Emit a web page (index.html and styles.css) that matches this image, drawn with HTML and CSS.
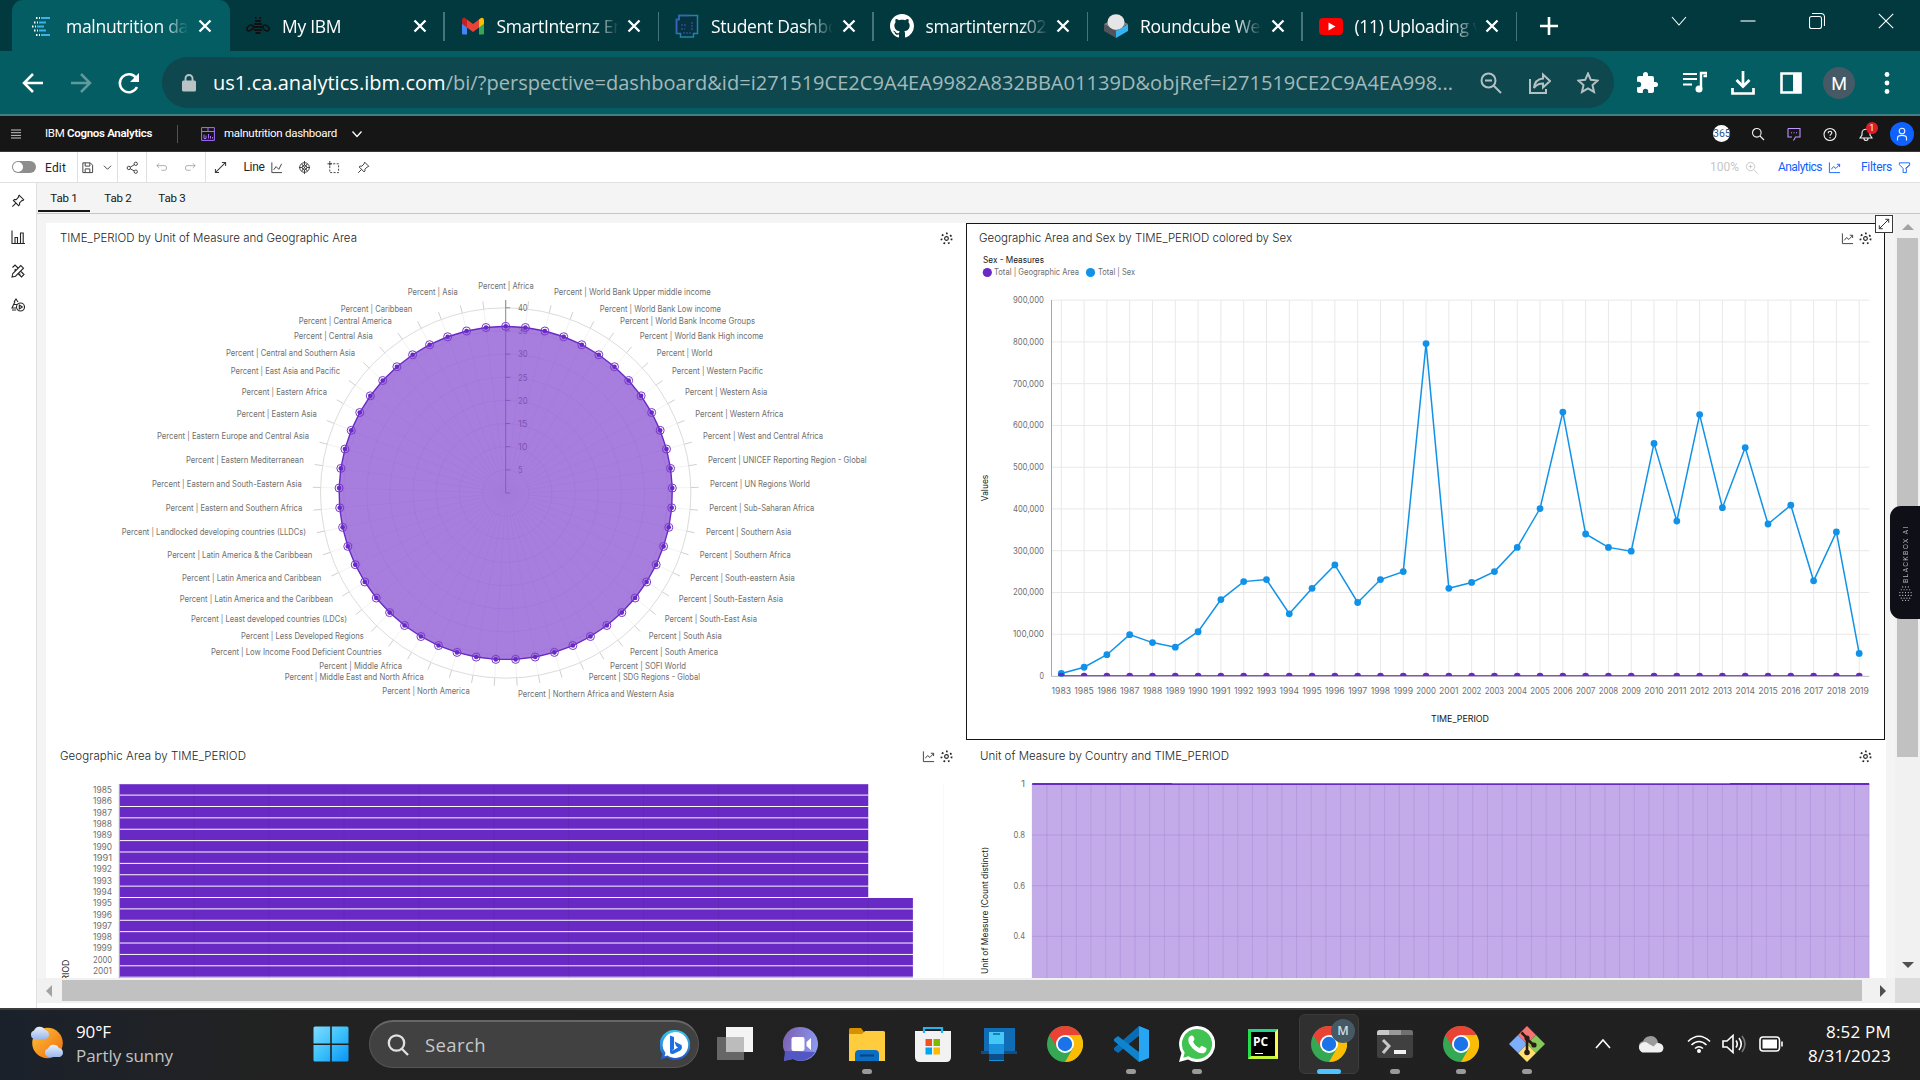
FILE: index.html
```html
<!DOCTYPE html>
<html lang="en">
<head>
<meta charset="utf-8">
<title>malnutrition dashboard</title>
<link rel="stylesheet" href="styles.css">
</head>
<body>
<svg class="defs" width="0" height="0" aria-hidden="true">
  <symbol id="close" viewBox="0 0 16 16"><path d="M2.5 2.5l11 11M13.5 2.5l-11 11" stroke="#fff" stroke-width="2.300" fill="none"/></symbol>
  <symbol id="gear" viewBox="0 0 14 14"><circle cx="7" cy="7" r="2" fill="none" stroke="#262626" stroke-width="1.200"/><circle cx="7" cy="7" r="5.500" fill="none" stroke="#262626" stroke-width="1.900" stroke-dasharray="1.900 3.037"/></symbol>
  <symbol id="trend" viewBox="0 0 14 14"><path d="M1.500 1.500v11h11.500M3.500 9l2.500-3 2.500 2 4-4.200M9.500 3.500h3v3" stroke="currentColor" fill="none" stroke-width="1"/></symbol>
  <symbol id="pin" viewBox="0 0 16 16"><path d="M9.500 1.500l5 5-1 1-.8-.3-3 3 .2 2-1.200 1.200-6-6 1.200-1.200 2 .2 3-3-.4-.9zM5.700 10.300L1.500 14.500" fill="none" stroke="currentColor" stroke-width="1.200"/></symbol>
  <symbol id="expand" viewBox="0 0 14 14"><path d="M8.500 1.500h4v4M12.500 1.500l-11 11M1.500 8.500v4h4" fill="none" stroke="currentColor" stroke-width="1.100"/></symbol>
  <symbol id="chrome" viewBox="0 0 36 36">
    <circle cx="18" cy="18" r="18" fill="#34a853"/>
    <path d="M18 9h15.600A18 18 0 0 1 18 36l7.800-13.500z" fill="#fbbc05"/>
    <path d="M2.400 9A18 18 0 0 1 33.600 9H18L10.200 13.500v9z" fill="#ea4335"/>
    <circle cx="18" cy="18" r="9" fill="#fff"/><circle cx="18" cy="18" r="7.200" fill="#1a73e8"/>
  </symbol>
</svg>

<div class="tabstrip">
  <div class="btab active">
    <svg class="fav" viewBox="0 0 24 24"><g stroke="#3fb0e8" stroke-width="1.800"><path d="M11 4h9M9 8.500h7M7 12.500h7M9 16.500h7M11 21h9"/><path stroke="#fff" stroke-dasharray="1.500 1.500" d="M6 4h4M4 8.500h4M2 12.500h4M4 16.500h4M6 21h4"/></g></svg>
    <span class="btitle">malnutrition dashboard</span><svg class="x"><use href="#close"/></svg>
  </div>
  <div class="btab">
    <svg class="fav" viewBox="0 0 24 24"><path d="M9 7h6M8 10h8M8 13h8M8 16h8M9.500 19h5M9 4h1.500M13.500 4H15" stroke="#101010" stroke-width="2"/><ellipse cx="4" cy="14" rx="3.500" ry="2.400" transform="rotate(-35 4 14)" fill="none" stroke="#101010" stroke-width="1.500"/><ellipse cx="20" cy="14" rx="3.500" ry="2.400" transform="rotate(35 20 14)" fill="none" stroke="#101010" stroke-width="1.500"/></svg>
    <span class="btitle">My IBM</span><svg class="x"><use href="#close"/></svg>
  </div>
  <div class="btab">
    <svg class="fav" viewBox="0 0 24 24"><path d="M1 6v13.500q0 1 1 1h4V10z" fill="#4285f4"/><path d="M23 6v13.500q0 1-1 1h-4V10z" fill="#34a853"/><path d="M18 5.500L20 4q3-1 3 2.500v3.300l-5 3.700z" fill="#fbbc04"/><path d="M1 9.800V6.500Q1 3 4 4l2 1.500v8z" fill="#c5221f"/><path d="M6 5.500l6 4.500 6-4.500v8L12 18l-6-4.500z" fill="#ea4335"/></svg>
    <span class="btitle">SmartInternz Email</span><svg class="x"><use href="#close"/></svg>
  </div>
  <div class="btab">
    <svg class="fav" viewBox="0 0 24 24"><path d="M4 1.500h18.500v18h-4v3.500h-13v-3.500H1.500V5.500H4z" fill="#073340" stroke="#2583a6" stroke-width="1.500"/><path d="M1.500 20V5.500H4V1.500h10" stroke="#3a61b8" fill="none" stroke-width="1.500"/><path d="M6 11h5M6 15h4M8 19h8M17 8v8" stroke="#244d91" stroke-width="1.500" stroke-dasharray="2 1"/></svg>
    <span class="btitle">Student Dashboard</span><svg class="x"><use href="#close"/></svg>
  </div>
  <div class="btab">
    <svg class="fav" viewBox="0 0 16 16"><path fill="#fff" d="M8 0C3.580 0 0 3.580 0 8c0 3.540 2.290 6.530 5.470 7.590.4.070.55-.17.55-.38 0-.19-.01-.82-.01-1.490-2.010.37-2.530-.49-2.690-.94-.09-.23-.48-.94-.82-1.130-.28-.15-.68-.52-.01-.53.63-.01 1.080.58 1.230.82.72 1.210 1.870.87 2.330.66.07-.52.28-.87.51-1.070-1.780-.2-3.640-.89-3.640-3.950 0-.87.31-1.590.82-2.150-.08-.2-.36-1.020.08-2.120 0 0 .67-.21 2.200.82.64-.18 1.320-.27 2-.27s1.360.09 2 .27c1.530-1.040 2.200-.82 2.200-.82.44 1.100.16 1.920.08 2.120.51.56.82 1.270.82 2.150 0 3.070-1.870 3.750-3.650 3.950.29.25.54.73.54 1.480 0 1.070-.01 1.930-.01 2.200 0 .21.15.46.55.38A8.010 8.010 0 0 0 16 8c0-4.420-3.580-8-8-8z"/></svg>
    <span class="btitle">smartinternz02/SI</span><svg class="x"><use href="#close"/></svg>
  </div>
  <div class="btab">
    <svg class="fav" viewBox="0 0 24 24"><path d="M0 10l12 7v7L0 17z" fill="#4f5559"/><path d="M24 10l-12 7v7l12-7z" fill="#35b4f4"/><path d="M0 10l12-6 12 6-12 7z" fill="#7b8386"/><ellipse cx="12" cy="8" rx="8.500" ry="7.800" fill="#e6e6e6"/></svg>
    <span class="btitle">Roundcube Webmail</span><svg class="x"><use href="#close"/></svg>
  </div>
  <div class="btab">
    <svg class="fav" viewBox="0 0 24 24"><rect y="4" width="24" height="17" rx="4" fill="#f00"/><path d="M9.500 8.500v8l7-4z" fill="#fff"/></svg>
    <span class="btitle">(11) Uploading vid</span><svg class="x"><use href="#close"/></svg>
  </div>
  <svg class="plus" viewBox="0 0 20 20"><path d="M10 1v18M1 10h18" stroke="#fff" stroke-width="2.600"/></svg>
  <div class="winctl">
    <svg viewBox="0 0 16 16"><path d="M1 4l7 8 7-8" /></svg>
    <svg viewBox="0 0 16 16"><path d="M.5 8h15"/></svg>
    <svg viewBox="0 0 16 16"><path d="M3 .5h9q3.500 0 3.500 3.500v9M2.500 3.500h8q2 0 2 2v8q0 2-2 2h-8q-2 0-2-2v-8q0-2 2-2z"/></svg>
    <svg viewBox="0 0 16 16"><path d="M.8.8l14.400 14.400M15.200.8L.8 15.200"/></svg>
  </div>
</div>

<div class="navbar">
  <div class="navbtns">
    <svg viewBox="0 0 24 24"><path d="M22 12H3M12 3l-9 9 9 9" stroke="#fff"/></svg>
    <svg viewBox="0 0 24 24"><path d="M2 12h19M12 3l9 9-9 9" stroke="#62999d"/></svg>
    <svg viewBox="0 0 24 24"><path d="M20 16a9 9 0 1 1-.5-8.500" stroke="#fff"/><path d="M22 2v9h-9z" fill="#fff" stroke="none"/></svg>
  </div>
  <div class="omnibox">
    <svg class="lock" viewBox="0 0 14 18"><path d="M3.500 8V4.500a3.500 3.500 0 0 1 7 0V8" fill="none" stroke="#b9c2c5" stroke-width="1.900"/><rect y="6.500" width="14" height="11" rx="1.500" fill="#b9c2c5"/></svg>
    <span class="url" data-w="1240"><b>us1.ca.analytics.ibm.com</b>/bi/?perspective=dashboard&amp;id=i271519CE2C9A4EA9982A832BBA01139D&amp;objRef=i271519CE2C9A4EA998...</span>
    <div class="omni-icons">
      <svg viewBox="0 0 22 22"><circle cx="8.500" cy="8.500" r="7"/><path d="M13.500 13.500L21 21M5 8.500h7"/></svg>
      <svg viewBox="0 0 22 22"><path d="M1 7v14h16v-4M5 16c.5-6 4-9 9-9.500V2.500L21 9l-7 6.500v-4c-4 0-7 1.500-9 4.500z"/></svg>
      <svg viewBox="0 0 22 22"><path d="M11 1.500l2.800 6.300 6.900.7-5.200 4.600 1.500 6.800-6-3.500-6 3.500 1.500-6.800L1.300 8.500l6.900-.7z"/></svg>
    </div>
  </div>
  <div class="ext">
    <svg viewBox="0 0 24 24"><path fill="#fff" d="M20.500 11H19V7a2 2 0 0 0-2-2h-4V3.500a2.500 2.500 0 0 0-5 0V5H4a2 2 0 0 0-2 2v3.800h1.500a2.700 2.700 0 0 1 0 5.400H2V20a2 2 0 0 0 2 2h3.800v-1.500a2.700 2.700 0 0 1 5.400 0V22H17a2 2 0 0 0 2-2v-4h1.500a2.500 2.500 0 0 0 0-5z"/></svg>
    <svg viewBox="0 0 24 24"><path d="M0 3h14M0 8h14M0 13.500h9" stroke="#fff" stroke-width="2.200"/><path d="M18 18V2h6v3h-3.500" fill="none" stroke="#fff" stroke-width="2.400"/><circle cx="16" cy="18" r="3.500" fill="#fff"/></svg>
    <svg viewBox="0 0 24 24"><path d="M12 0v14M5.500 9l6.500 6.500L18.500 9M1.500 17v5.500h21V17" fill="none" stroke="#fff" stroke-width="2.700"/></svg>
    <svg viewBox="0 0 24 24"><path d="M2.500 2.500h19v19h-19z" fill="none" stroke="#fff" stroke-width="2.600"/><path d="M14 2h8v20h-8z" fill="#fff"/></svg>
    <span class="avatar">M</span>
    <svg viewBox="0 0 24 24"><g fill="#fff"><circle cx="12" cy="3.500" r="2.400"/><circle cx="12" cy="12" r="2.400"/><circle cx="12" cy="20.500" r="2.400"/></g></svg>
  </div>
</div>

<header class="apphead">
  <svg class="burger" viewBox="0 0 10 10"><path d="M0 1h10M0 3.700h10M0 6.400h10M0 9h10" stroke="#c6c6c6"/></svg>
  <span class="brand" data-w="107">IBM <b>Cognos Analytics</b></span>
  <i class="hsep"></i>
  <svg class="dashico" viewBox="0 0 14 14" fill="none" stroke="#a56eff"><path d="M.6.600h12.800v12.800H.6zM.6 4.500h12.800M7 .6v3.900M3 7.500v4h2v-3M7.500 7v4.500M9.500 9v2.500M11.500 10v1.500"/></svg>
  <span class="dashname" data-w="113">malnutrition dashboard</span>
  <svg class="hchev" viewBox="0 0 10 10"><path d="M.5 2.500L5 7.500l4.500-5" fill="none" stroke="#fff" stroke-width="1.300"/></svg>
  <div class="headicons">
    <span><em class="c365">365</em></span>
    <span><svg viewBox="0 0 14 14"><circle cx="5.800" cy="5.800" r="4.300"/><path d="M9 9l4 4"/></svg></span>
    <span><svg class="chat" viewBox="0 0 14 14"><path d="M1 1.500h12v8.500H8.500L6.500 13.500M1 1.500V10h4M4 5.800h1M6.500 5.800h1M9 5.800h1"/></svg></span>
    <span><svg viewBox="0 0 14 14"><circle cx="7" cy="7.500" r="6"/><path d="M5.200 6.200c0-2.600 3.800-2.400 3.600-.2-.1 1.300-1.800 1.200-1.800 2.800M7 10v1.200"/></svg></span>
    <span class="bell"><svg viewBox="0 0 14 14"><path d="M1 11h12l-2-3V6c0-5-8-5-8 0v2zM5 11.500c0 2.600 4 2.600 4 0"/></svg><em class="badge">1</em></span>
    <span><em class="user"><svg viewBox="0 0 14 14"><circle cx="7" cy="4" r="2.800"/><path d="M2.500 13.500V11c0-3.500 9-3.500 9 0v2.500"/></svg></em></span>
  </div>
</header>

<div class="toolbar">
  <span class="toggle"></span><span class="edit" data-w="21">Edit</span><i></i>
  <span class="save"><svg viewBox="0 0 14 14"><path d="M2 2h8l2.500 2.500V12.500H2zM4.500 2v3.500h5V2M4.500 12.500v-4h5v4"/></svg><svg class="mini" viewBox="0 0 10 10"><path d="M1 3l4 4 4-4"/></svg></span><i></i>
  <span class="one"><svg viewBox="0 0 14 14"><circle cx="3" cy="7.500" r="1.800"/><circle cx="10.500" cy="3" r="1.800"/><circle cx="10.500" cy="11.500" r="1.800"/><path d="M4.600 6.600L9 4M4.600 8.400L9 10.700"/></svg></span><i></i>
  <span class="undo"><svg viewBox="0 0 14 14"><path d="M4.500 2.500L2 5l2.500 2.500M2 5h8.500q2 0 2 2.500T10.500 10H7"/></svg><svg viewBox="0 0 14 14"><path d="M9.500 2.500L12 5 9.500 7.500M12 5H3.500q-2 0-2 2.500T3.500 10H7"/></svg></span><i></i>
  <span class="cell"><svg><use href="#expand"/></svg></span>
  <span class="line"><span data-w="21">Line</span><svg viewBox="0 0 14 14"><path d="M2 1.500v11h11M4 9.500l2.500-3.500 3 3L12.500 3"/></svg></span>
  <span class="cell"><svg viewBox="0 0 14 14"><circle cx="7" cy="7" r="5.200"/><circle cx="7" cy="7" r="2.500"/><path d="M7 0v4.500M7 9.500V14M1 7h3.500M9.500 7H13M4 3l6 8M10 3l-6 8"/></svg></span>
  <span class="cell"><svg viewBox="0 0 14 14"><path d="M3 3h9.500v9.500H3z" stroke-dasharray="2.200 1.500"/><path d="M3 0v5M.5 3h5"/></svg></span>
  <span class="cell"><svg><use href="#pin"/></svg></span>
  <div class="tright">
    <span class="zoomlvl"><span data-w="29">100%</span><svg viewBox="0 0 14 14"><circle cx="6" cy="6" r="4.500"/><path d="M9.500 9.500l4 4M6 4v4M4 6h4"/></svg></span>
    <span class="blue"><span data-w="44">Analytics</span><svg><use href="#trend"/></svg></span>
    <span class="blue"><span data-w="31">Filters</span><svg viewBox="0 0 14 14"><path d="M1.500 2h11v2L9 8v4.500H5.500V8L1.500 4zM8 8l5-4"/></svg></span>
  </div>
</div>

<div class="work">
  <nav class="rail">
    <svg><use href="#pin"/></svg>
    <svg viewBox="0 0 14 14"><path d="M1 .5v13h13M4 13V7.500h2.500V13M9.500 13V3h2.700v10"/></svg>
    <svg viewBox="0 0 14 14"><path d="M1.500 3.500L4 1l3 3M9.500 7l3.500 3.500-2.500 2.500L7 9.500M1 13l.8-3.500 8-8 2.700 2.700-8 8zM3.500 6.500l1.300-1.300M8 11l1.300-1.300"/></svg>
    <svg viewBox="0 0 14 14"><path d="M5 10H1l3-6.500M3 4L5 1l2 3M1 12h4M3 6.500h3"/><circle cx="9.500" cy="9" r="4"/><path d="M8.300 7v4l3-2z"/></svg>
  </nav>
  <div class="main">
    <div class="dtabs"><span class="on">Tab 1</span><span>Tab 2</span><span>Tab 3</span></div>
    <div class="stage">
      <div class="canvas">
        <section class="panel">
          <h2><span data-w="297">TIME_PERIOD by Unit of Measure and Geographic Area</span><svg><use href="#gear"/></svg></h2>
          <svg id="radar" viewBox="46 253 920 487"></svg>
        </section>
        <section class="panel selected">
          <h2><span data-w="313">Geographic Area and Sex by TIME_PERIOD colored by Sex</span><svg><use href="#trend"/></svg><svg><use href="#gear"/></svg></h2>
          <svg id="lines" viewBox="967 253 917 486"></svg>
          <span class="grow"><svg><use href="#expand"/></svg></span>
        </section>
        <section class="panel">
          <h2><span data-w="186">Geographic Area by TIME_PERIOD</span><svg><use href="#trend"/></svg><svg><use href="#gear"/></svg></h2>
          <svg id="bars" viewBox="46 772 920 206"></svg>
        </section>
        <section class="panel">
          <h2><span data-w="249">Unit of Measure by Country and TIME_PERIOD</span><svg><use href="#gear"/></svg></h2>
          <svg id="area" viewBox="966 772 919 206"></svg>
        </section>
      </div>
      <div class="vscroll"><svg viewBox="0 0 12 6"><path d="M0 6l6-6 6 6z" fill="#a3a3a3"/></svg><i></i><svg viewBox="0 0 12 6"><path d="M0 0l6 6 6-6z" fill="#505050"/></svg></div>
      <div class="hscroll"><svg viewBox="0 0 6 12"><path d="M6 0L0 6l6 6z" fill="#a3a3a3"/></svg><i></i><svg viewBox="0 0 6 12"><path d="M0 0l6 6-6 6z" fill="#505050"/></svg></div>
      <div class="corner"></div>
    </div>
  </div>
</div>

<aside class="blackbox"><span>BLACKBOX AI</span>
  <svg viewBox="0 0 16 16"><g fill="none" stroke="#c8c8d0" stroke-linecap="round" stroke-dasharray="0 3" stroke-width="1.300"><path d="M5 1h7M3.500 4h10M2 7h13M2 10h13M3.500 13h10M5 15.300h7"/></g></svg>
</aside>

<footer class="taskbar">
  <div class="weather">
    <svg viewBox="0 0 36 34"><defs><linearGradient id="sun" x2="1" y2="1"><stop stop-color="#ffc53a"/><stop offset="1" stop-color="#ee6a0c"/></linearGradient><linearGradient id="cl" x2="0" y2="1"><stop stop-color="#e8f0fd"/><stop offset="1" stop-color="#9db7ec"/></linearGradient></defs><circle cx="18.500" cy="18" r="15.300" fill="url(#sun)"/><path d="M5 14a4.500 4.500 0 0 1 0-8.500 6 6 0 0 1 11-.5 4.700 4.700 0 0 1 1 9z" fill="url(#cl)"/><path d="M19 32a4.500 4.500 0 0 1 0-8.500 6 6 0 0 1 11-.5 4.700 4.700 0 0 1 1 9z" fill="url(#cl)"/></svg>
    <p><span data-w="35">90°F</span><span class="dim" data-w="97">Partly sunny</span></p>
  </div>
  <div class="tasks">
    <span class="app"><svg viewBox="0 0 36 36"><defs><linearGradient id="win" x2="1" y2="1"><stop stop-color="#7fdcff"/><stop offset=".5" stop-color="#3cc1fb"/><stop offset="1" stop-color="#0a93f5"/></linearGradient></defs><path d="M2 .5h15.200v17H.5V2q0-1.500 1.500-1.500zM18.800.500H34q1.500 0 1.500 1.500v15.500H18.800zM.5 19h16.700v16.500H2Q.5 35.500.5 34zM18.800 19h16.700v15q0 1.500-1.500 1.500H18.800z" fill="url(#win)"/></svg></span>
    <div class="search">
      <svg class="glass" viewBox="0 0 22 22"><circle cx="9.500" cy="9" r="7.700"/><path d="M14.500 14.500l6.500 6.500"/></svg>
      <span data-w="61">Search</span>
      <svg class="bing" viewBox="0 0 30 30"><defs><linearGradient id="bg" x2="0" y2="1"><stop stop-color="#35c8ee"/><stop offset="1" stop-color="#2556c8"/></linearGradient></defs><path d="M15 0a15 15 0 1 1-8 27.500L.5 29.500 2.500 24A15 15 0 0 1 15 0z" fill="url(#bg)"/><path d="M15 2a13 13 0 1 1-7.500 23.500l-3 .8 1-3.300A13 13 0 0 1 15 2z" fill="#fff"/><path d="M10 5.500l4 1.500v12l-4 3.500zM14.500 11.500l7 3.500q1.500 4-2 6l-6.500 3q-3 .5-3-2l8-4.500-2-1.500z" fill="#1b6fe0"/></svg>
    </div>
    <span class="app"><svg viewBox="0 0 36 36"><path d="M0 11h27v23H0z" fill="#666"/><path d="M9 1h27v25H9z" fill="#f4f4f4"/><path d="M9 11h18v15H9z" fill="#bcbcbc"/></svg></span>
    <span class="app"><svg viewBox="0 0 36 36"><defs><linearGradient id="ch" x1="0" x2="1" y2=".3"><stop stop-color="#7b5cab"/><stop offset="1" stop-color="#8a97ee"/></linearGradient></defs><path d="M18 1a17 17 0 1 1-8 32l-9 2 1.500-8A17 17 0 0 1 18 1z" fill="url(#ch)"/><path d="M2 25l-1 9.500L10 33a17 17 0 0 0 22-7z" fill="#5357c4"/><rect x="8.500" y="11" width="13" height="14" rx="2" fill="#fff"/><path d="M23.500 16l4.500-4v12l-4.500-4z" fill="#fff"/></svg></span>
    <span class="app run"><svg viewBox="0 0 36 36"><path d="M0 3.500Q0 2 1.500 2H12l3 4v4H0z" fill="#d99000"/><path d="M0 8h13l3-3h18.500Q36 5 36 6.500V35H0z" fill="#ffcc3d"/><path d="M6 35v-7q0-4 4-4h16q4 0 4 4v7z" fill="#0a6fc2"/><path d="M11 29.500h14" stroke="#06427c" stroke-width="2"/></svg></span>
    <span class="app"><svg viewBox="0 0 36 36"><path d="M0 5h36v26q0 5-5 5H5q-5 0-5-5z" fill="#f2f2f2"/><path d="M10.500 13H17v7h-6.500z" fill="#f25022"/><path d="M18.500 13H25v7h-6.500z" fill="#7fba00"/><path d="M10.500 21.500H17v7h-6.500z" fill="#00a4ef"/><path d="M18.500 21.500H25v7h-6.500z" fill="#ffb900"/><path d="M9 7V2h18v5" fill="none" stroke="#29b3ee" stroke-width="2.200"/></svg></span>
    <span class="app"><svg viewBox="0 0 36 36"><path d="M3 2h31v25H3z" fill="#0f6cb5"/><path d="M0 25h36v3H0z" fill="#0b4f8c"/><path d="M8 6h15v29H8z" fill="#1891dc"/><path d="M8 6h15v12H8z" fill="#45c8f5"/><path d="M8 28h15v6H8z" fill="#0b4f8c"/><path d="M12 8h7" stroke="#1580bb" stroke-width="2"/></svg></span>
    <span class="app"><svg><use href="#chrome"/></svg></span>
    <span class="app run"><svg viewBox="0 0 36 36"><path d="M26 0l10 4v28l-10 4-1-12z" fill="#27a5f2"/><path d="M26 0v10L5 27l-4-3v-2z" fill="#0a6db4"/><path d="M26 36V26L5 10l-4 3v2z" fill="#0f83cc"/><path d="M26 10v16l-10-8z" fill="#222"/></svg></span>
    <span class="app run"><svg viewBox="0 0 36 36"><path d="M18 0a18 18 0 1 1-9 33.500L0 36l2.500-9A18 18 0 0 1 18 0z" fill="#fff"/><path d="M18 3a15 15 0 1 1-8.500 27.300L4.300 31.800l1.400-5.200A15 15 0 0 1 18 3z" fill="#41c352"/><path d="M12.500 9.500q2-.5 3 3.500-.2 1.500-1.500 2.500 2 4.500 6.500 6.500l2-2.300q1 0 5 2.500.3 3.500-3 5-5 1-11-5-5.500-6-3.800-10.500 1-2 2.800-2.200z" fill="#fff"/></svg></span>
    <span class="app pc"><em>PC</em></span>
    <span class="app tile"><svg><use href="#chrome"/></svg><em>M</em></span>
    <span class="app run"><svg viewBox="0 0 36 36"><rect y="4" width="36" height="28" rx="2.500" fill="#404040"/><path d="M0 9V6.500Q0 4 2.500 4H12v5z" fill="#c9c9c9"/><path d="M12 4h12v5H12z" fill="#9a9a9a"/><path d="M24 4h9.500Q36 4 36 6.500V9H24z" fill="#707070"/><path d="M6 14l6 6-6 7" stroke="#c8c8c8" fill="none" stroke-width="3"/><path d="M17 24h12v4H17z" fill="#f2f2f2"/></svg></span>
    <span class="app run"><svg><use href="#chrome"/></svg></span>
    <span class="app run"><svg viewBox="0 0 36 36"><path d="M18 0l9 9-9 9-9-9z" fill="#f47373"/><path d="M27 9l9 9-9 9-9-9z" fill="#86c95a"/><path d="M18 18l9 9-9 9-9-9z" fill="#ffe06e"/><path d="M9 9l9 9-9 9-9-9z" fill="#7daefc"/><path d="M12.500 6.500L18 12v15M18 13l6.500 6" stroke="#2b1b17" stroke-width="2.600" fill="none"/><circle cx="18" cy="12" r="2.600" fill="#2b1b17"/><circle cx="18" cy="26.500" r="2.800" fill="#2b1b17"/><circle cx="25" cy="19" r="2.600" fill="#2b1b17"/></svg></span>
  </div>
  <div class="tray">
    <svg class="up" viewBox="0 0 16 16"><path d="M1 12l7-8 7 8"/></svg>
    <svg class="cloud" viewBox="0 0 26 18"><path d="M6 17a5.500 5.500 0 0 1-1-10.800A8 8 0 0 1 19 4.500L21 10l-8 7z" fill="#9b9b9b"/><path d="M6 17.500a5 5 0 0 1-3.500-8.500Q7 5 11 9l4.500 2.500L19 8q6 0 6.500 5-.5 4.500-5 4.500z" fill="#f0f0f0"/></svg>
    <svg class="wifi" viewBox="0 0 24 18"><path d="M1 6.500q11-10.500 22 0M4.500 10q7.500-7 15 0M8 13.500q4-3.500 8 0"/><circle cx="12" cy="16" r="1.200" fill="#fff"/></svg>
    <svg class="vol" viewBox="0 0 24 20"><path d="M1 7h4l6-5.500v17L5 13H1zM14 6.500q2.500 3.500 0 7M17 4q4.500 6 0 12"/><path d="M20 2q6 8 0 16" stroke="#777"/></svg>
    <svg class="batt" viewBox="0 0 24 16"><rect x="1" y="1" width="19.500" height="14" rx="3"/><path d="M3.500 3.500H18v9H3.500z" fill="#fff" stroke="none"/><path d="M23 5.500v5"/></svg>
    <p><span data-w="65">8:52 PM</span><span data-w="83">8/31/2023</span></p>
  </div>
</footer>
<script src="charts.js"></script>
</body>
</html>
```
FILE: styles.css
```css
* { box-sizing: border-box; }
body { margin: 0; width: 1920px; height: 1080px; overflow: hidden; display: flex; flex-direction: column; background: #fff; font-family: Roboto, "Noto Sans", sans-serif; color: #161616; }
svg { display: block; flex: none; overflow: hidden; }
i, em { font-style: normal; }
p, h2 { margin: 0; font-weight: 400; }
[data-w] { white-space: nowrap; display: block; flex: none; }
.defs { position: absolute; }

/* browser tab strip */
.tabstrip { height: 51px; background: #02393f; display: flex; align-items: center; padding-left: 12px; font-family: "Open Sans", "Noto Sans", sans-serif; font-size: 17.500px; color: #fff; flex: none; }
.btab { width: 214.500px; height: 51px; display: flex; align-items: center; padding: 0 17px 0 16px; position: relative; flex: none; }
.btab.active { width: 218px; background: #045d63; border-radius: 11px 11px 0 0; padding-left: 18px; }
.btab:not(.active)::after { content: ""; position: absolute; right: 0; top: 12px; width: 1.500px; height: 29px; background: #457479; }
.fav { width: 24px; height: 24px; }
.btitle { margin-left: 12px; width: 122px; overflow: hidden; white-space: nowrap; letter-spacing: -.3px; -webkit-mask-image: linear-gradient(90deg, #000 78%, transparent); mask-image: linear-gradient(90deg, #000 78%, transparent); }
.x { width: 16px; height: 16px; margin-left: auto; }
.plus { width: 20px; height: 20px; margin-left: 22px; }
.winctl { margin-left: auto; display: flex; gap: 53px; padding: 0 26px 9px 0; }
.winctl svg { width: 16px; height: 16px; fill: none; stroke: #fff; stroke-width: 1.100; }

/* browser address row */
.navbar { height: 65px; background: #045d63; border-bottom: 2px solid #3f8084; display: flex; align-items: center; flex: none; }
.navbtns { width: 162px; display: flex; gap: 24px; padding-left: 21px; }
.navbtns svg { width: 24px; height: 24px; fill: none; stroke-width: 2.500; }
.omnibox { width: 1452px; height: 51px; border-radius: 26px; background: #0e484e; display: flex; align-items: center; padding-left: 20px; flex: none; }
.lock { width: 14px; height: 18px; margin-right: 17px; }
.url { font: 20px "Open Sans", "Noto Sans", sans-serif; color: #a3b9bb; }
.url b { color: #fff; font-weight: 400; }
.omni-icons { display: flex; gap: 26.500px; margin-left: 27px; }
.omni-icons svg { width: 22px; height: 22px; fill: none; stroke: #b5c0c2; stroke-width: 2; }
.ext { display: flex; align-items: center; gap: 24px; margin-left: 21px; }
.ext svg { width: 24px; height: 24px; }
.avatar { width: 32px; height: 32px; border-radius: 50%; background: #455a64; color: #fff; font-size: 18px; line-height: 33px; text-align: center; margin: 0 -4px; }

/* product header */
.apphead { height: 36px; background: #161616; border-bottom: 1px solid #393939; display: flex; align-items: center; color: #fff; font-size: 11.500px; flex: none; padding-left: 11px; }
.burger { width: 10px; height: 10px; margin-right: 24px; }
.brand, .dashname { padding-bottom: 1px; }
.brand b { font-weight: 600; }
.hsep { width: 1px; height: 18px; background: #525252; margin: 0 23px 0 25px; }
.dashico { width: 14px; height: 14px; margin-right: 9px; }
.hchev { width: 10px; height: 10px; margin-left: 15px; }
.headicons { margin-left: auto; display: flex; }
.headicons > span { width: 36.100px; height: 35px; display: flex; align-items: center; justify-content: center; position: relative; }
.headicons svg { width: 14px; height: 14px; fill: none; stroke: #f4f4f4; stroke-width: 1.100; }
.headicons .chat { stroke: #be95ff; }
.c365 { width: 17px; height: 17px; border-radius: 50%; background: #fff; color: #1f5694; font-size: 10.500px; line-height: 17px; }
.badge { position: absolute; left: 18px; top: 6px; width: 12px; height: 12px; border-radius: 50%; background: #da1e28; font-size: 9px; line-height: 12px; text-align: center; }
.user { width: 24px; height: 24px; border-radius: 50%; background: #0f62fe; display: flex; align-items: center; justify-content: center; }

/* dashboard toolbar */
.toolbar { height: 31px; border-bottom: 1px solid #e0e0e0; display: flex; align-items: center; font-size: 12px; color: #262626; flex: none; }
.toolbar svg { width: 13px; height: 13px; fill: none; stroke: #393939; stroke-width: 1; color: #393939; }
.toolbar > i { width: 1px; height: 30px; background: #e0e0e0; }
.toggle { width: 24px; height: 12px; border-radius: 6px; background: #8d8d8d; margin: 0 9px 0 12px; display: flex; align-items: center; padding-left: 1px; }
.toggle::before { content: ""; width: 10px; height: 10px; border-radius: 50%; background: #fff; }
.edit { margin-right: 11px; padding-top: 1px; }
.save { width: 39px; display: flex; align-items: center; justify-content: space-between; padding: 0 5px 0 3px; }
.toolbar .mini { width: 9px; height: 9px; }
.one { width: 28px; display: flex; justify-content: center; }
.undo { width: 58px; display: flex; justify-content: space-around; }
.toolbar .undo svg { stroke: #a8a8a8; }
.cell { width: 29.500px; display: flex; justify-content: center; }
.line { display: flex; align-items: center; gap: 5px; margin: 0 7px 0 8px; }
.tright { margin-left: auto; display: flex; align-items: center; gap: 20px; padding-right: 9px; }
.tright > span { display: flex; align-items: center; gap: 6px; }
.zoomlvl { color: #c6c6c6; }
.toolbar .zoomlvl svg { stroke: #c6c6c6; }
.blue { color: #0f62fe; }
.toolbar .blue svg { stroke: #0f62fe; color: #0f62fe; }

/* work area */
.work { height: 825px; display: flex; flex: none; }
.rail { width: 37px; border-right: 1px solid #e0e0e0; display: flex; flex-direction: column; align-items: center; gap: 20px; padding-top: 11px; }
.rail svg { width: 14px; height: 14px; fill: none; stroke: #262626; stroke-width: 1.100; color: #262626; }
.rail svg:first-child { margin-bottom: 2px; }
.main { flex: 1; min-width: 0; }
.dtabs { height: 31px; background: #f4f4f4; border-bottom: 1px solid #c6c6c6; display: flex; font-size: 11.500px; padding-left: 1px; gap: 2px; }
.dtabs span { width: 52px; height: 30px; line-height: 31px; text-align: center; letter-spacing: -.2px; }
.dtabs .on { border-bottom: 2px solid #161616; height: 29px; }
.stage { display: grid; grid-template-columns: 1858px 25px; grid-template-rows: 764px 25px; }
.canvas { background: #f4f4f4; padding: 9px 9px 0; display: grid; grid-template-columns: 920px 920px; grid-template-rows: 517px 238px; overflow: hidden; }
.panel { background: #fff; position: relative; min-width: 0; overflow: hidden; }
.panel h2 { height: 30px; display: flex; align-items: center; gap: 5px; font: 300 11.500px Inter, sans-serif; padding: 0 13px 0 14px; color: #262626; }
.panel:nth-child(n+3) h2 { height: 32px; }
.panel h2 span { margin-right: auto; }
.panel h2 svg { width: 13px; height: 13px; color: #393939; }
.panel > svg { width: 920px; }
.panel.selected { border: 1px solid #161616; overflow: visible; width: 919px; }
.panel.selected h2 { height: 29px; padding: 0 12px 1px 12px; }
.panel:nth-child(4) h2 { padding-right: 14px; }
#radar { height: 487px; }
#lines { width: 917px; height: 486px; }
#bars { height: 206px; }
#area { width: 919px; height: 206px; }
.grow { position: absolute; right: -9px; top: -9px; width: 18px; height: 18px; border: 1px solid #393939; background: #fff; display: grid; place-items: center; color: #262626; }
.grow svg { width: 12px; height: 12px; }
.vscroll { background: #f1f1f1; display: flex; flex-direction: column; align-items: center; padding: 10px 0; }
.vscroll svg { width: 12px; height: 6px; }
.vscroll i { width: 21px; height: 519px; background: #c1c1c1; margin: 8px 0 auto; }
.hscroll { background: #f1f1f1; display: flex; align-items: center; padding: 0 9px; }
.hscroll svg { width: 6px; height: 12px; }
.hscroll i { width: 1800px; height: 21px; background: #c1c1c1; margin: 0 auto 0 10px; }
.corner { background: #dcdcdc; }

/* chart text and marks */
.ct { font-family: Inter, sans-serif; font-size: 8.300px; fill: #6f6f6f; }
.ax { fill: #161616; }
.grid { stroke: #e8e8e8; stroke-width: 1; fill: none; }
.pgrid { stroke: #6929c4; stroke-opacity: .07; fill: none; }

.blackbox { position: absolute; right: 0; top: 506px; width: 30px; height: 113px; border-radius: 11px 0 0 11px; background: #0f0f17; display: flex; flex-direction: column; align-items: center; padding-top: 17px; gap: 3px; }
.blackbox span { writing-mode: vertical-rl; transform: rotate(180deg); color: #b5b5bd; font: 6.800px Inter, sans-serif; letter-spacing: 1.150px; height: 60px; white-space: nowrap; }
.blackbox svg { width: 15px; height: 15px; }

/* taskbar */
.taskbar { height: 72px; background: linear-gradient(90deg, #1b212b, #222 14%, #202020); border-top: 2px solid #3d3d3d; padding-bottom: 2px; display: flex; align-items: center; font: 17px "Open Sans", "Noto Sans", sans-serif; color: #fff; flex: none; }
.weather { width: 298px; padding-left: 29px; display: flex; align-items: center; gap: 11px; }
.weather svg { width: 36px; height: 34px; margin-bottom: 4px; }
.weather p, .tray p { line-height: 24px; }
.dim { color: #c4c4c4; }
.weather p span { width: max-content; }
.tasks { display: flex; align-items: center; }
.app { width: 66px; height: 60px; display: flex; align-items: center; justify-content: center; position: relative; flex: none; }
.app svg { width: 36px; height: 36px; }
.run::after { content: ""; position: absolute; left: 28px; bottom: 0; width: 10px; height: 5px; border-radius: 3px; background: #9a9a9a; }
.search { width: 330px; height: 48px; border-radius: 24px; background: #414141; border: 1px solid #565656; border-top: 2px solid #666; display: flex; align-items: center; padding: 0 8px 0 17px; margin: 0 3px 0 5px; color: #c8c8c8; font-size: 18.500px; }
.glass { width: 22px; height: 22px; fill: none; stroke: #e2e2e2; stroke-width: 2.300; margin-right: 16px; }
.bing { width: 30px; height: 30px; margin-left: auto; }
.pc em { width: 30px; height: 30px; background: #000; border: 3px solid; border-color: #21d789 #fcf84a #c4f53a #21e04a; font: bold 12px/19px "Open Sans", sans-serif; padding-left: 2px; position: relative; }
.pc em::after { content: ""; position: absolute; left: 4px; bottom: 2px; width: 8px; height: 1.500px; background: #fff; }
.tile::before { content: ""; position: absolute; inset: 0 3px; background: #303030; border: 1px solid #3c3c3c; border-radius: 6px; }
.tile svg { position: relative; }
.tile em { position: absolute; left: 35px; top: 5px; width: 24px; height: 24px; border-radius: 50%; background: #455a64; color: #d5dbde; font-size: 12.500px; font-weight: 600; line-height: 24px; text-align: center; }
.tile::after { content: ""; position: absolute; left: 21px; bottom: 0; width: 24px; height: 5px; border-radius: 3px; background: #4cc2ff; }
.tray { margin-left: auto; display: flex; align-items: center; padding-right: 29px; }
.tray svg { fill: none; stroke: #fff; stroke-width: 1.600; }
.up { width: 16px; height: 16px; margin-right: 27px; }
.cloud { width: 26px; height: 18px; margin-right: 23px; }
.tray .cloud { stroke: none; }
.wifi { width: 24px; height: 18px; margin-right: 11px; }
.vol { width: 24px; height: 20px; margin-right: 13px; }
.batt { width: 24px; height: 16px; margin-right: 24px; }
.tray p { width: 84px; display: flex; flex-direction: column; align-items: flex-end; }
```
FILE: charts.js
```js
const NS = 'http://www.w3.org/2000/svg';

function add(svg, tag, attrs, text) {
  const node = document.createElementNS(NS, tag);
  for (const k in attrs) node.setAttribute(k, attrs[k]);
  if (text !== undefined) node.textContent = text;
  svg.appendChild(node);
  return node;
}
const line = (s, x1, y1, x2, y2, extra) => add(s, 'line', Object.assign({ x1, y1, x2, y2 }, extra));
const label = (s, x, y, str, w, anchor, cls) => add(s, 'text', {
  x, y: y + 3, class: 'ct ' + (cls || ''), 'text-anchor': anchor || 'start',
  textLength: w, lengthAdjust: 'spacingAndGlyphs'
}, str);
const vlabel = (s, x, y, str, w) => label(s, x, y, str, w, 'middle', 'ax').setAttribute('transform', `rotate(-90 ${x} ${y})`);

/* Radar: 53 regions, every percent value plotted at 36 on a 0-40 scale */
function radar() {
  const s = document.getElementById('radar'), cx = 505.7, cy = 493, n = 53, unit = 23.15 / 5, r = 36 * unit;
  const at = (i, q) => [cx + q * Math.sin(2 * Math.PI * i / n), cy - q * Math.cos(2 * Math.PI * i / n)];
  for (let i = 0; i < n; i++) {
    const a = at(i, 185.2), b = at(i, 193);
    line(s, cx, cy, a[0], a[1], { stroke: '#f2f2f2' });
    line(s, a[0], a[1], b[0], b[1], { stroke: '#d0d0d0' });
  }
  add(s, 'circle', { cx, cy, r: 185.2, fill: 'none', stroke: '#dcdcdc' });
  line(s, cx, 300, cx, cy, { stroke: '#8d8d8d' });
  for (let v = 0; v <= 40; v += 5) {
    const y = cy - v * unit;
    line(s, cx, y, cx + 4.500, y, { stroke: '#8d8d8d' });
    if (v) label(s, 518, y + .3, String(v), v > 5 ? 9.500 : 4.500);
  }
  const pts = Array.from({ length: n }, (_, i) => at(i, r));
  add(s, 'polygon', { points: pts.join(' '), fill: '#8247d0', 'fill-opacity': .7, stroke: '#6929c4', 'stroke-width': 1.400 });
  for (let v = 5; v <= 35; v += 5) add(s, 'circle', { cx, cy, r: v * unit, class: 'pgrid' });
  for (const p of pts) {
    add(s, 'circle', { cx: p[0], cy: p[1], r: 4, fill: 'none', stroke: '#7539c9', 'stroke-width': 1 });
    add(s, 'circle', { cx: p[0], cy: p[1], r: 2.300, fill: '#6929c4' });
  }
  const names = [
    ['Africa', 478.3, 533.7, 286], ['Asia', 407.7, 457.7, 292], ['Caribbean', 340.7, 412.3, 309],
    ['Central America', 298.7, 391.7, 321], ['Central Asia', 294, 372.7, 336], ['Central and Southern Asia', 226, 355, 353],
    ['East Asia and Pacific', 230.7, 340, 371], ['Eastern Africa', 241.7, 327, 392], ['Eastern Asia', 236.7, 316.7, 414],
    ['Eastern Europe and Central Asia', 157, 309, 436], ['Eastern Mediterranean', 186, 303.7, 460],
    ['Eastern and South-Eastern Asia', 152, 301.7, 484], ['Eastern and Southern Africa', 165.7, 302.3, 508],
    ['Landlocked developing countries (LLDCs)', 121.7, 306, 532], ['Latin America & the Caribbean', 167.3, 312.3, 555],
    ['Latin America and Caribbean', 182, 321.3, 578], ['Latin America and the Caribbean', 179.7, 333, 599],
    ['Least developed countries (LDCs)', 191, 347, 619], ['Less Developed Regions', 241, 363.7, 636],
    ['Low Income Food Deficient Countries', 211, 381.7, 652], ['Middle Africa', 319.3, 402, 666],
    ['Middle East and North Africa', 284.7, 423.7, 677], ['North America', 382.3, 469.7, 691],
    ['World Bank Upper middle income', 554, 710.7, 292], ['World Bank Low income', 599.7, 721, 309],
    ['World Bank Income Groups', 620, 755, 321], ['World Bank High income', 639.7, 763.3, 336], ['World', 656.7, 712.3, 353],
    ['Western Pacific', 672, 763, 371], ['Western Asia', 685, 767.3, 392], ['Western Africa', 695.3, 783.3, 414],
    ['West and Central Africa', 703, 823, 436], ['UNICEF Reporting Region - Global', 708, 866.7, 460],
    ['UN Regions World', 710, 810, 484], ['Sub-Saharan Africa', 709.3, 814.3, 508], ['Southern Asia', 706, 791.3, 532],
    ['Southern Africa', 699.7, 790.7, 555], ['South-eastern Asia', 690.3, 794.7, 578], ['South-Eastern Asia', 678.7, 783, 599],
    ['South-East Asia', 664.7, 757, 619], ['South Asia', 648.7, 721.7, 636], ['South America', 630, 718, 652],
    ['SOFI World', 610, 686, 666], ['SDG Regions - Global', 588.7, 700, 677], ['Northern Africa and Western Asia', 518, 674, 694]
  ];
  for (const [name, x0, x1, y] of names) label(s, x0, y, 'Percent | ' + name, x1 - x0);
}

/* Line chart, values in thousands */
function lines() {
  const s = document.getElementById('lines'), zero = 676, per = .4176, x0 = 1061.3, step = 22.797;
  const vals = [6, 21, 51, 99, 80, 69, 106, 183, 226, 231, 149, 210, 266, 176, 231, 250, 796, 210, 224, 250, 308, 401, 632, 340, 308, 299, 557, 371, 626, 403, 547, 364, 409, 228, 345, 54];
  label(s, 983, 260, 'Sex - Measures', 61, 'start', 'ax');
  add(s, 'circle', { cx: 987.3, cy: 272.500, r: 4.600, fill: '#6929c4' });
  label(s, 994, 272.300, 'Total | Geographic Area', 85);
  add(s, 'circle', { cx: 1090.500, cy: 272.500, r: 4.600, fill: '#1192e8' });
  label(s, 1098, 272.300, 'Total | Sex', 37);
  for (let v = 0; v <= 900; v += 100) {
    const y = zero - v * per;
    line(s, 1051, y, 1869.300, y, { class: 'grid' });
    label(s, 1044, y, v ? v + ',000' : '0', v ? 31 : 4.500, 'end');
  }
  vals.forEach((v, i) => {
    const x = x0 + i * step;
    line(s, x, 300, x, zero, { class: 'grid' });
    label(s, x, 691, String(i ? 1984 + i : 1983), 19.500, 'middle');
  });
  line(s, 1051.500, 300, 1051.500, 676.500, { stroke: '#a8a8a8' });
  line(s, 1051, 676.500, 1869.300, 676.500, { stroke: '#c6c6c6' });
  const pts = vals.map((v, i) => [x0 + i * step, zero - v * per]);
  add(s, 'polyline', { points: pts.join(' '), fill: 'none', stroke: '#1192e8', 'stroke-width': 1.500 });
  for (const p of pts) add(s, 'circle', { cx: p[0], cy: p[1], r: 3.400, fill: '#1192e8' });
  line(s, x0, 675.700, x0 + 35 * step, 675.700, { stroke: '#8a4fd0', 'stroke-width': 1.200 });
  for (const p of pts) add(s, 'path', { d: `M${p[0] - 3.300} 676a3.300 3.300 0 0 1 6.600 0z`, fill: '#6929c4' });
  label(s, 1460, 719, 'TIME_PERIOD', 58, 'middle', 'ax');
  vlabel(s, 985, 488, 'Values', 26.500);
}

/* Horizontal bars by year */
function bars() {
  const s = document.getElementById('bars');
  line(s, 943.500, 784, 943.500, 978, { stroke: '#f8f8f8' });
  for (let i = 0; i < 18; i++) {
    const y = 784.200 + i * 11.380, end = i < 10 ? 868.200 : 912.900;
    add(s, 'rect', { x: 119.400, y, width: end - 119.400, height: 10.400, fill: '#6929c4' });
    if (i < 17) label(s, 112, 790 + i * 11.320, String(1985 + i), 19, 'end');
  }
  for (let i = 1; i < 11; i++) line(s, 119.400 + i * 74.880, 784, 119.400 + i * 74.880, 978, { stroke: '#000', 'stroke-opacity': .05 });
  line(s, 119.300, 784, 119.300, 978, { stroke: '#a8a8a8' });
  vlabel(s, 65.500, 988.500, 'TIME_PERIOD', 58);
}

/* Area chart with a constant count of 1 */
function area() {
  const s = document.getElementById('area'), l = 1032.200, w = 837;
  add(s, 'rect', { x: l, y: 784, width: w, height: 200, fill: '#c3aae8' });
  for (let i = 0; i <= 57; i++) line(s, l + i * w / 57, 784, l + i * w / 57, 978, { stroke: '#8a6cbf', 'stroke-opacity': .24 });
  [['1', 784], ['0.8', 835], ['0.6', 885.700], ['0.4', 936.300]].forEach(([t, y], i) => {
    if (i) line(s, l, y, l + w, y, { stroke: '#8a6cbf', 'stroke-opacity': .28 });
    label(s, 1025, y, t, i ? 11.500 : 4, 'end');
  });
  line(s, l, 784, l + w, 784, { stroke: '#6929c4', 'stroke-width': 2 });
  line(s, 1172, 783.500, 1730, 783.500, { stroke: '#9763d6', 'stroke-width': 1 });
  vlabel(s, 985, 910.500, 'Unit of Measure (Count distinct)', 127);
}

/* Letter-spacing that brings each caption to its column width */
function fit() {
  document.querySelectorAll('[data-w]').forEach(el => {
    el.style.width = 'max-content';
    const natural = el.getBoundingClientRect().width;
    const gap = (el.dataset.w - natural) / el.textContent.length;
    el.style.letterSpacing = gap + 'px';
    el.style.width = el.dataset.w + 'px';
  });
}
radar(); lines(); bars(); area(); fit();
```
